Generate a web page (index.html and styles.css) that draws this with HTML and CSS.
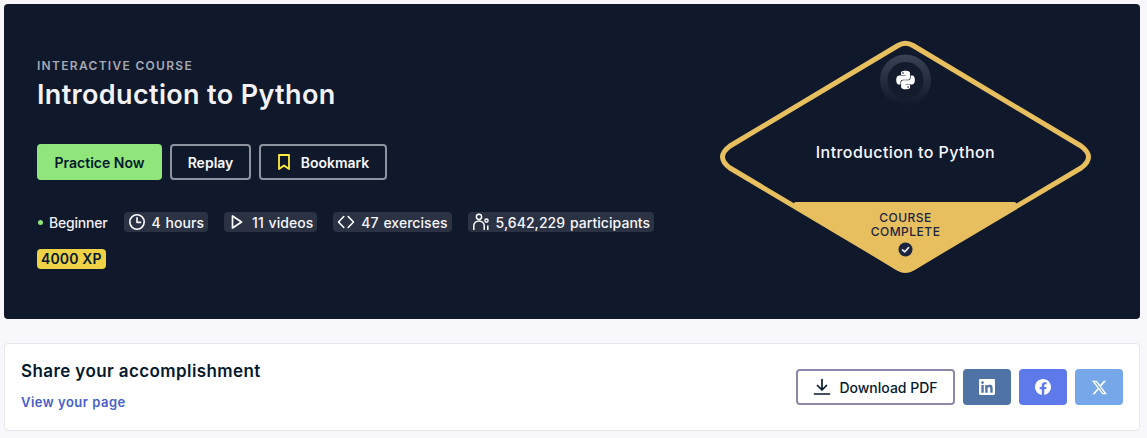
FILE: index.html
```html
<!DOCTYPE html>
<html lang="en">
<head>
<meta charset="utf-8">
<title>Introduction to Python</title>
<link rel="stylesheet" href="styles.css">
</head>
<body>
<main class="page">
  <section class="hero">
    <div class="hero-info">
      <div class="eyebrow">INTERACTIVE COURSE</div>
      <h1 class="title">Introduction to Python</h1>
      <div class="actions">
        <a class="btn btn-primary">Practice Now</a>
        <a class="btn btn-outline">Replay</a>
        <a class="btn btn-outline btn-bookmark">
          <svg class="ico-bookmark" viewBox="0 0 14 18" width="14" height="18"><path d="M2 2h10v14l-5-3.600L2 16z" fill="none" stroke="#ffec3c" stroke-width="1.800" stroke-linejoin="round"/></svg>
          Bookmark
        </a>
      </div>
      <ul class="meta">
        <li class="level"><span class="dot"></span>Beginner</li>
        <li class="pill">
          <svg viewBox="0 0 18 18" width="18" height="18"><circle cx="9" cy="9" r="7.200" fill="none" stroke="#fff" stroke-width="1.600"/><path d="M9 4.800V9.400h3.600" fill="none" stroke="#fff" stroke-width="1.600" stroke-linecap="round" stroke-linejoin="round"/></svg>
          4 hours
        </li>
        <li class="pill">
          <svg viewBox="0 0 18 18" width="18" height="18"><path d="M4.500 3v12l9-6z" fill="none" stroke="#fff" stroke-width="1.700" stroke-linejoin="round"/></svg>
          11 videos
        </li>
        <li class="pill">
          <svg viewBox="0 0 18 18" width="18" height="18"><path d="M6.800 3.500L1.500 9l5.300 5.500M11.200 3.500L16.500 9l-5.300 5.500" fill="none" stroke="#fff" stroke-width="1.600" stroke-linecap="round" stroke-linejoin="round"/></svg>
          47 exercises
        </li>
        <li class="pill">
          <svg viewBox="0 0 18 18" width="18" height="18"><circle cx="7" cy="3.800" r="2.600" fill="none" stroke="#fff" stroke-width="1.500"/><path d="M1.800 17v-4.500a5.200 4.600 0 0 1 10.400 0V17" fill="none" stroke="#fff" stroke-width="1.500"/><circle cx="14.500" cy="7.600" r="1.600" fill="none" stroke="#fff" stroke-width="1.400"/><path d="M15.800 17v-4.500" fill="none" stroke="#fff" stroke-width="1.500"/></svg>
          5,642,229 participants
        </li>
      </ul>
      <span class="xp">4000 XP</span>
    </div>
    <svg class="badge" viewBox="716 36 380 242" width="380" height="242">
      <defs>
        <linearGradient id="ring" x1="0" y1="0" x2="0" y2="1">
          <stop offset="0" stop-color="#3a4356"/>
          <stop offset="1" stop-color="#3a4356" stop-opacity="0"/>
        </linearGradient>
      </defs>
      <path d="M898 45.500Q905.500 41 913 45.500L1081 146Q1096 157 1081 168L913 268Q905.500 272.500 898 268L730 168Q715 157 730 146Z" fill="#10182c" stroke="#e7bf5f" stroke-width="5" stroke-linejoin="round"/>
      <path d="M796 204.500H1014L913 268Q905.500 272.500 898 268Z" fill="#e7bf5f" stroke="#e7bf5f" stroke-width="5" stroke-linejoin="round"/>
      <circle cx="905.500" cy="80" r="25.500" fill="url(#ring)"/>
      <circle cx="905.500" cy="80" r="18" fill="#141b2c"/>
      <g transform="translate(896.300 70.800) scale(0.77)"><path fill="#fff" d="M14.250.18l.9.2.73.26.59.3.45.32.34.34.25.34.16.33.1.3.04.26.02.2-.01.13V8.500l-.05.63-.13.55-.21.46-.26.38-.3.31-.33.25-.35.19-.35.14-.33.1-.3.07-.26.04-.21.02H8.770l-.69.05-.59.14-.5.22-.41.27-.33.32-.27.35-.2.36-.15.37-.1.35-.07.32-.04.27-.02.21v3.060H3.170l-.21-.03-.28-.07-.32-.12-.35-.18-.36-.26-.36-.36-.35-.46-.32-.59-.28-.73-.21-.88-.14-1.050-.05-1.230.06-1.220.16-1.040.24-.87.32-.71.36-.57.4-.44.42-.33.42-.24.4-.16.36-.1.32-.05.24-.01h.16l.06.01h8.160v-.83H6.180l-.01-2.750-.02-.37.05-.34.11-.31.17-.28.25-.26.31-.23.38-.2.44-.18.51-.15.58-.12.64-.1.71-.06.77-.04.84-.02 1.270.05zm-6.300 1.980l-.23.33-.08.41.08.41.23.34.33.22.41.09.41-.09.33-.22.23-.34.08-.41-.08-.41-.23-.33-.33-.22-.41-.09-.41.09zm13.090 3.950l.28.06.32.12.35.18.36.27.36.35.35.47.32.59.28.73.21.88.14 1.040.05 1.230-.06 1.230-.16 1.040-.24.86-.32.71-.36.57-.4.45-.42.33-.42.24-.4.16-.36.09-.32.05-.24.02-.16-.01h-8.220v.82h5.840l.01 2.760.02.36-.05.34-.11.31-.17.29-.25.25-.31.24-.38.2-.44.17-.51.15-.58.13-.64.09-.71.07-.77.04-.84.01-1.270-.04-1.070-.14-.9-.2-.73-.25-.59-.3-.45-.33-.34-.34-.25-.34-.16-.33-.1-.3-.04-.25-.02-.2.01-.13v-5.340l.05-.64.13-.54.21-.46.26-.38.3-.32.33-.24.35-.2.35-.14.33-.1.3-.06.26-.04.21-.02.13-.01h5.840l.69-.05.59-.14.5-.21.41-.28.33-.32.27-.35.2-.36.15-.36.1-.35.07-.32.04-.28.02-.21V6.070h2.090l.14.01zm-6.470 14.250l-.23.33-.08.41.08.41.23.33.33.23.41.08.41-.08.33-.23.23-.33.08-.41-.08-.41-.23-.33-.33-.23-.41-.08-.41.08z"/></g>
      <text class="badge-title" x="905.500" y="158" text-anchor="middle">Introduction to Python</text>
      <text class="badge-label" x="905.500" y="222" text-anchor="middle">COURSE</text>
      <text class="badge-label" x="905.500" y="236" text-anchor="middle">COMPLETE</text>
      <circle cx="905.500" cy="249.500" r="7" fill="#1b2540"/>
      <path d="M902.500 249.800l2.200 2.100 3.900-4.300" fill="none" stroke="#e7e7e7" stroke-width="1.600" stroke-linecap="round" stroke-linejoin="round"/>
    </svg>
  </section>
  <section class="share">
    <div class="share-text">
      <h2 class="share-title">Share your accomplishment</h2>
      <a class="share-link">View your page</a>
    </div>
    <div class="share-actions">
      <a class="btn-download">
        <svg viewBox="0 0 18 18" width="18" height="18"><path d="M9 1.500V11.500M4.500 7.500L9 12l4.500-4.500M1.500 16h15" fill="none" stroke="#05192d" stroke-width="1.700" stroke-linecap="round" stroke-linejoin="round"/></svg>
        Download PDF
      </a>
      <a class="social social-li"><svg viewBox="0 0 24 24" width="16" height="16"><path fill="#fff" d="M20.447 20.452h-3.554v-5.569c0-1.328-.027-3.037-1.852-3.037-1.853 0-2.136 1.445-2.136 2.939v5.667H9.351V9h3.414v1.561h.046c.477-.9 1.637-1.850 3.370-1.850 3.601 0 4.267 2.370 4.267 5.455v6.286zM5.337 7.433c-1.144 0-2.063-.926-2.063-2.065 0-1.138.92-2.063 2.063-2.063 1.140 0 2.064.925 2.064 2.063 0 1.139-.925 2.065-2.064 2.065zm1.782 13.019H3.555V9h3.564v11.452zM22.225 0H1.771C.792 0 0 .774 0 1.729v20.542C0 23.227.792 24 1.771 24h20.451C23.200 24 24 23.227 24 22.271V1.729C24 .774 23.200 0 22.222 0h.003z"/></svg></a>
      <a class="social social-fb"><svg viewBox="0 0 24 24" width="16" height="16"><path fill="#fff" d="M24 12.073c0-6.627-5.373-12-12-12s-12 5.373-12 12c0 5.990 4.388 10.954 10.125 11.854v-8.385H7.078v-3.470h3.047V9.430c0-3.007 1.792-4.669 4.533-4.669 1.312 0 2.686.235 2.686.235v2.953H15.830c-1.491 0-1.956.925-1.956 1.874v2.250h3.328l-.532 3.470h-2.796v8.385C19.612 23.027 24 18.062 24 12.073z"/></svg></a>
      <a class="social social-x"><svg viewBox="0 0 24 24" width="15" height="15"><path fill="#fff" d="M18.901 1.153h3.680l-8.040 9.190L24 22.846h-7.406l-5.800-7.584-6.638 7.584H.474l8.600-9.830L0 1.154h7.594l5.243 6.932ZM17.610 20.644h2.039L6.486 3.240H4.298Z"/></svg></a>
    </div>
  </section>
</main>
</body>
</html>
```

FILE: styles.css
```css
* { box-sizing: border-box; }

html, body { margin: 0; height: 100%; }

body {
  background: #f7f7fc;
  font-family: Inter, "Liberation Sans", sans-serif;
  overflow: hidden;
}

.page {
  display: flex;
  flex-direction: column;
  gap: 24px;
  padding: 4px 7px 0 4px;
}

.hero {
  display: flex;
  justify-content: space-between;
  align-items: flex-start;
  height: 315px;
  padding: 32px 44px 0 33px;
  background: #10182c;
  border-radius: 4px;
  color: #fff;
}

.hero-info { display: flex; flex-direction: column; align-items: flex-start; padding-top: 22px; }

.eyebrow {
  font-size: 12px;
  line-height: 16px;
  font-weight: 600;
  letter-spacing: 1.3px;
  color: #a5a9b3;
}

.title {
  margin: 3px 0 0;
  font-size: 27px;
  line-height: 36px;
  font-weight: 600;
  letter-spacing: 0.35px;
  color: #f2f2f7;
}

.actions { display: flex; gap: 8px; margin-top: 31px; }

.btn {
  display: flex;
  align-items: center;
  justify-content: center;
  gap: 10px;
  height: 36px;
  border-radius: 4px;
  font-size: 14px;
  font-weight: 600;
}

.btn-primary { width: 125px; background: #90e67a; color: #05192d; }
.btn-outline { border: 2px solid #8e93a0; color: #f7f7fc; }
.btn-outline:not(.btn-bookmark) { width: 81px; }
.btn-bookmark { width: 128px; }

.meta {
  display: flex;
  align-items: center;
  gap: 16px;
  margin: 32px 0 0;
  padding: 0;
  list-style: none;
  font-size: 14px;
  font-weight: 500;
  letter-spacing: 0.05px;
  word-spacing: 1px;
}

.level { display: flex; align-items: center; gap: 6px; letter-spacing: -0.2px; color: #f2f2f7; }
.dot { width: 5px; height: 5px; margin-left: 1px; border-radius: 50%; background: #90e67a; }

.pill {
  display: flex;
  align-items: center;
  gap: 6px;
  height: 20px;
  padding: 0 4px;
  border-radius: 4px;
  background: #2a3244;
  color: #f7f7fc;
  white-space: nowrap;
}

.xp {
  margin-top: 17px;
  height: 20px;
  padding: 0 4px;
  border-radius: 4px;
  background: #eed145;
  color: #05192d;
  font-size: 14px;
  line-height: 20px;
  font-weight: 600;
  letter-spacing: 0.15px;
}

.badge { flex: none; }

.badge-title { font-size: 16px; font-weight: 500; fill: #f7f7fc; letter-spacing: 0.42px; }
.badge-label { font-size: 12px; font-weight: 500; fill: #1b2540; letter-spacing: 0.5px; }

.share {
  display: flex;
  justify-content: space-between;
  align-items: center;
  height: 88px;
  padding: 0 16px;
  background: #fff;
  border: 1px solid #e6e6ec;
  border-radius: 4px;
}

.share-text { display: flex; flex-direction: column; gap: 10px; padding-bottom: 5px; }

.share-title {
  margin: 0;
  font-size: 17px;
  line-height: 24px;
  font-weight: 600;
  letter-spacing: 0.4px;
  color: #05192d;
}

.share-link {
  font-size: 13px;
  line-height: 18px;
  font-weight: 600;
  letter-spacing: 0.5px;
  color: #4560c8;
}

.share-actions { display: flex; gap: 8px; }

.btn-download {
  display: flex;
  align-items: center;
  justify-content: center;
  gap: 8px;
  width: 159px;
  height: 36px;
  border: 2px solid #8b89a8;
  border-radius: 4px;
  font-size: 14px;
  font-weight: 500;
  color: #05192d;
}

.social {
  display: flex;
  align-items: center;
  justify-content: center;
  width: 48px;
  height: 36px;
  border-radius: 4px;
}

.social-li { background: #5073a5; }
.social-fb { background: #5e79ea; }
.social-x { background: #76a7e8; }
```
